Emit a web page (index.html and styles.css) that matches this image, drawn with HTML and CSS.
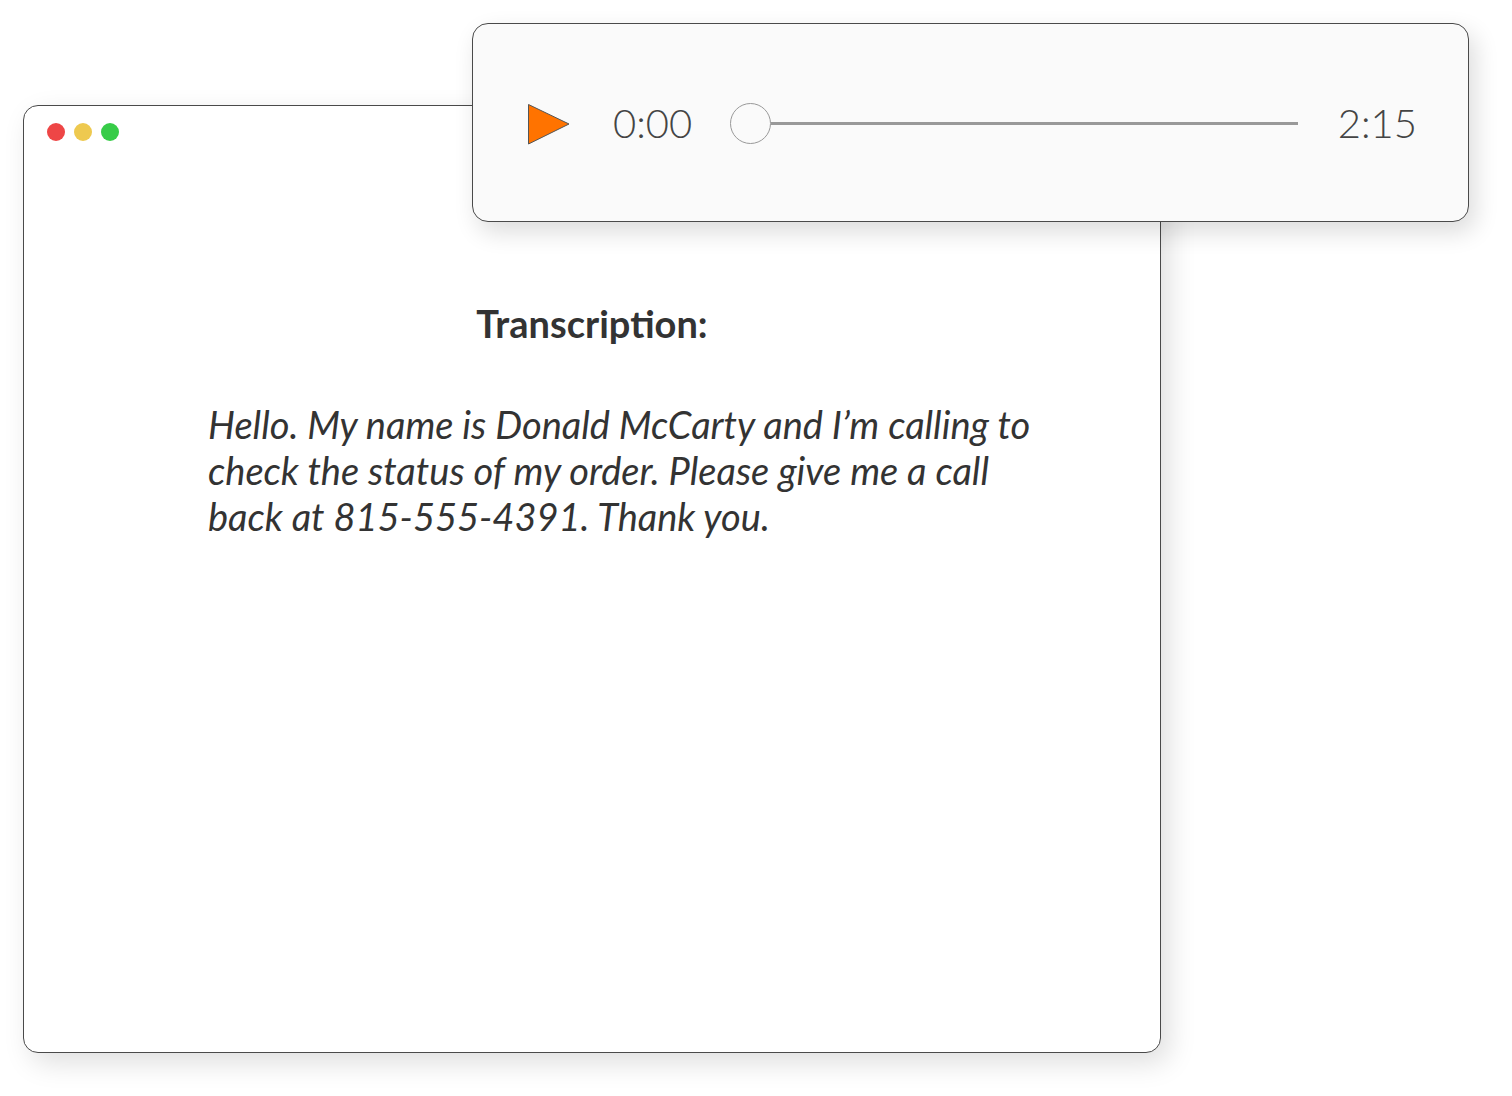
FILE: index.html
```html
<!DOCTYPE html>
<html lang="en">
<head>
    <meta charset="UTF-8">
    <title>Voicemail Transcription</title>
    <link rel="stylesheet" href="styles.css">
</head>
<body>
    <div class="stage">
        <div class="window">
            <div class="titlebar">
                <span class="dot red"></span>
                <span class="dot yellow"></span>
                <span class="dot green"></span>
            </div>
            <h2 class="heading">Transcription:</h2>
            <p class="transcript">Hello. My name is Donald McCarty and I’m calling to check the status of my order. Please give me a call back at 815-555-4391. Thank you.</p>
        </div>

        <div class="player">
            <svg class="play" width="44" height="44" viewBox="0 0 44 44">
                <polygon points="1.5,2.5 42,22 1.5,42" fill="#ff7300" stroke="#555" stroke-width="1"/>
            </svg>
            <span class="time">0:00</span>
            <div class="track">
                <span class="knob"></span>
                <span class="line"></span>
            </div>
            <span class="time end">2:15</span>
        </div>
    </div>
</body>
</html>
```

FILE: styles.css
```css
body {
    margin: 0;
    background-color: #fff;
    font-family: Lato, "Open Sans", sans-serif;
    color: #333;
}
.stage {
    position: relative;
    width: 1512px;
    height: 1096px;
    padding: 105px 0 0 23px;
    box-sizing: border-box;
}
.window {
    width: 1138px;
    height: 948px;
    box-sizing: border-box;
    border: 1px solid #4a4a4a;
    border-radius: 15px;
    background-color: #fff;
    box-shadow: 8px 10px 28px rgba(0,0,0,0.13);
}
.titlebar {
    display: flex;
    gap: 9px;
    padding: 17px 0 0 23px;
}
.dot {
    width: 18px;
    height: 18px;
    border-radius: 50%;
}
.dot.red { background-color: #ee4646; }
.dot.yellow { background-color: #eec94f; }
.dot.green { background-color: #37cc48; }
.heading {
    margin: 160px 0 0;
    text-align: center;
    font-size: 38px;
    font-weight: 700;
    line-height: 44px;
    color: #333;
}
.transcript {
    margin: 56px 0 0 184px;
    width: 845px;
    font-size: 38px;
    font-style: italic;
    line-height: 46px;
    color: #333;
}
.player {
    position: absolute;
    top: 23px;
    left: 472px;
    width: 997px;
    height: 199px;
    box-sizing: border-box;
    display: flex;
    align-items: center;
    padding: 0 51px 0 54px;
    background-color: #fafafa;
    border: 1px solid #4a4a4a;
    border-radius: 16px;
    box-shadow: 6px 10px 24px rgba(0,0,0,0.14);
}
.play {
    margin-top: 2px;
    flex: none;
}
.time {
    margin-left: 42px;
    font-size: 40px;
    font-weight: 300;
    color: #444;
    line-height: 1;
}
.track {
    flex: 1;
    display: flex;
    align-items: center;
    margin: 2px 40px 0 38px;
}
.knob {
    width: 39px;
    height: 39px;
    border: 1px solid #999;
    border-radius: 50%;
    background-color: #fafafa;
    flex: none;
}
.line {
    flex: 1;
    height: 3px;
    background-color: #999;
}
.time.end {
    margin-left: 0;
}
```
